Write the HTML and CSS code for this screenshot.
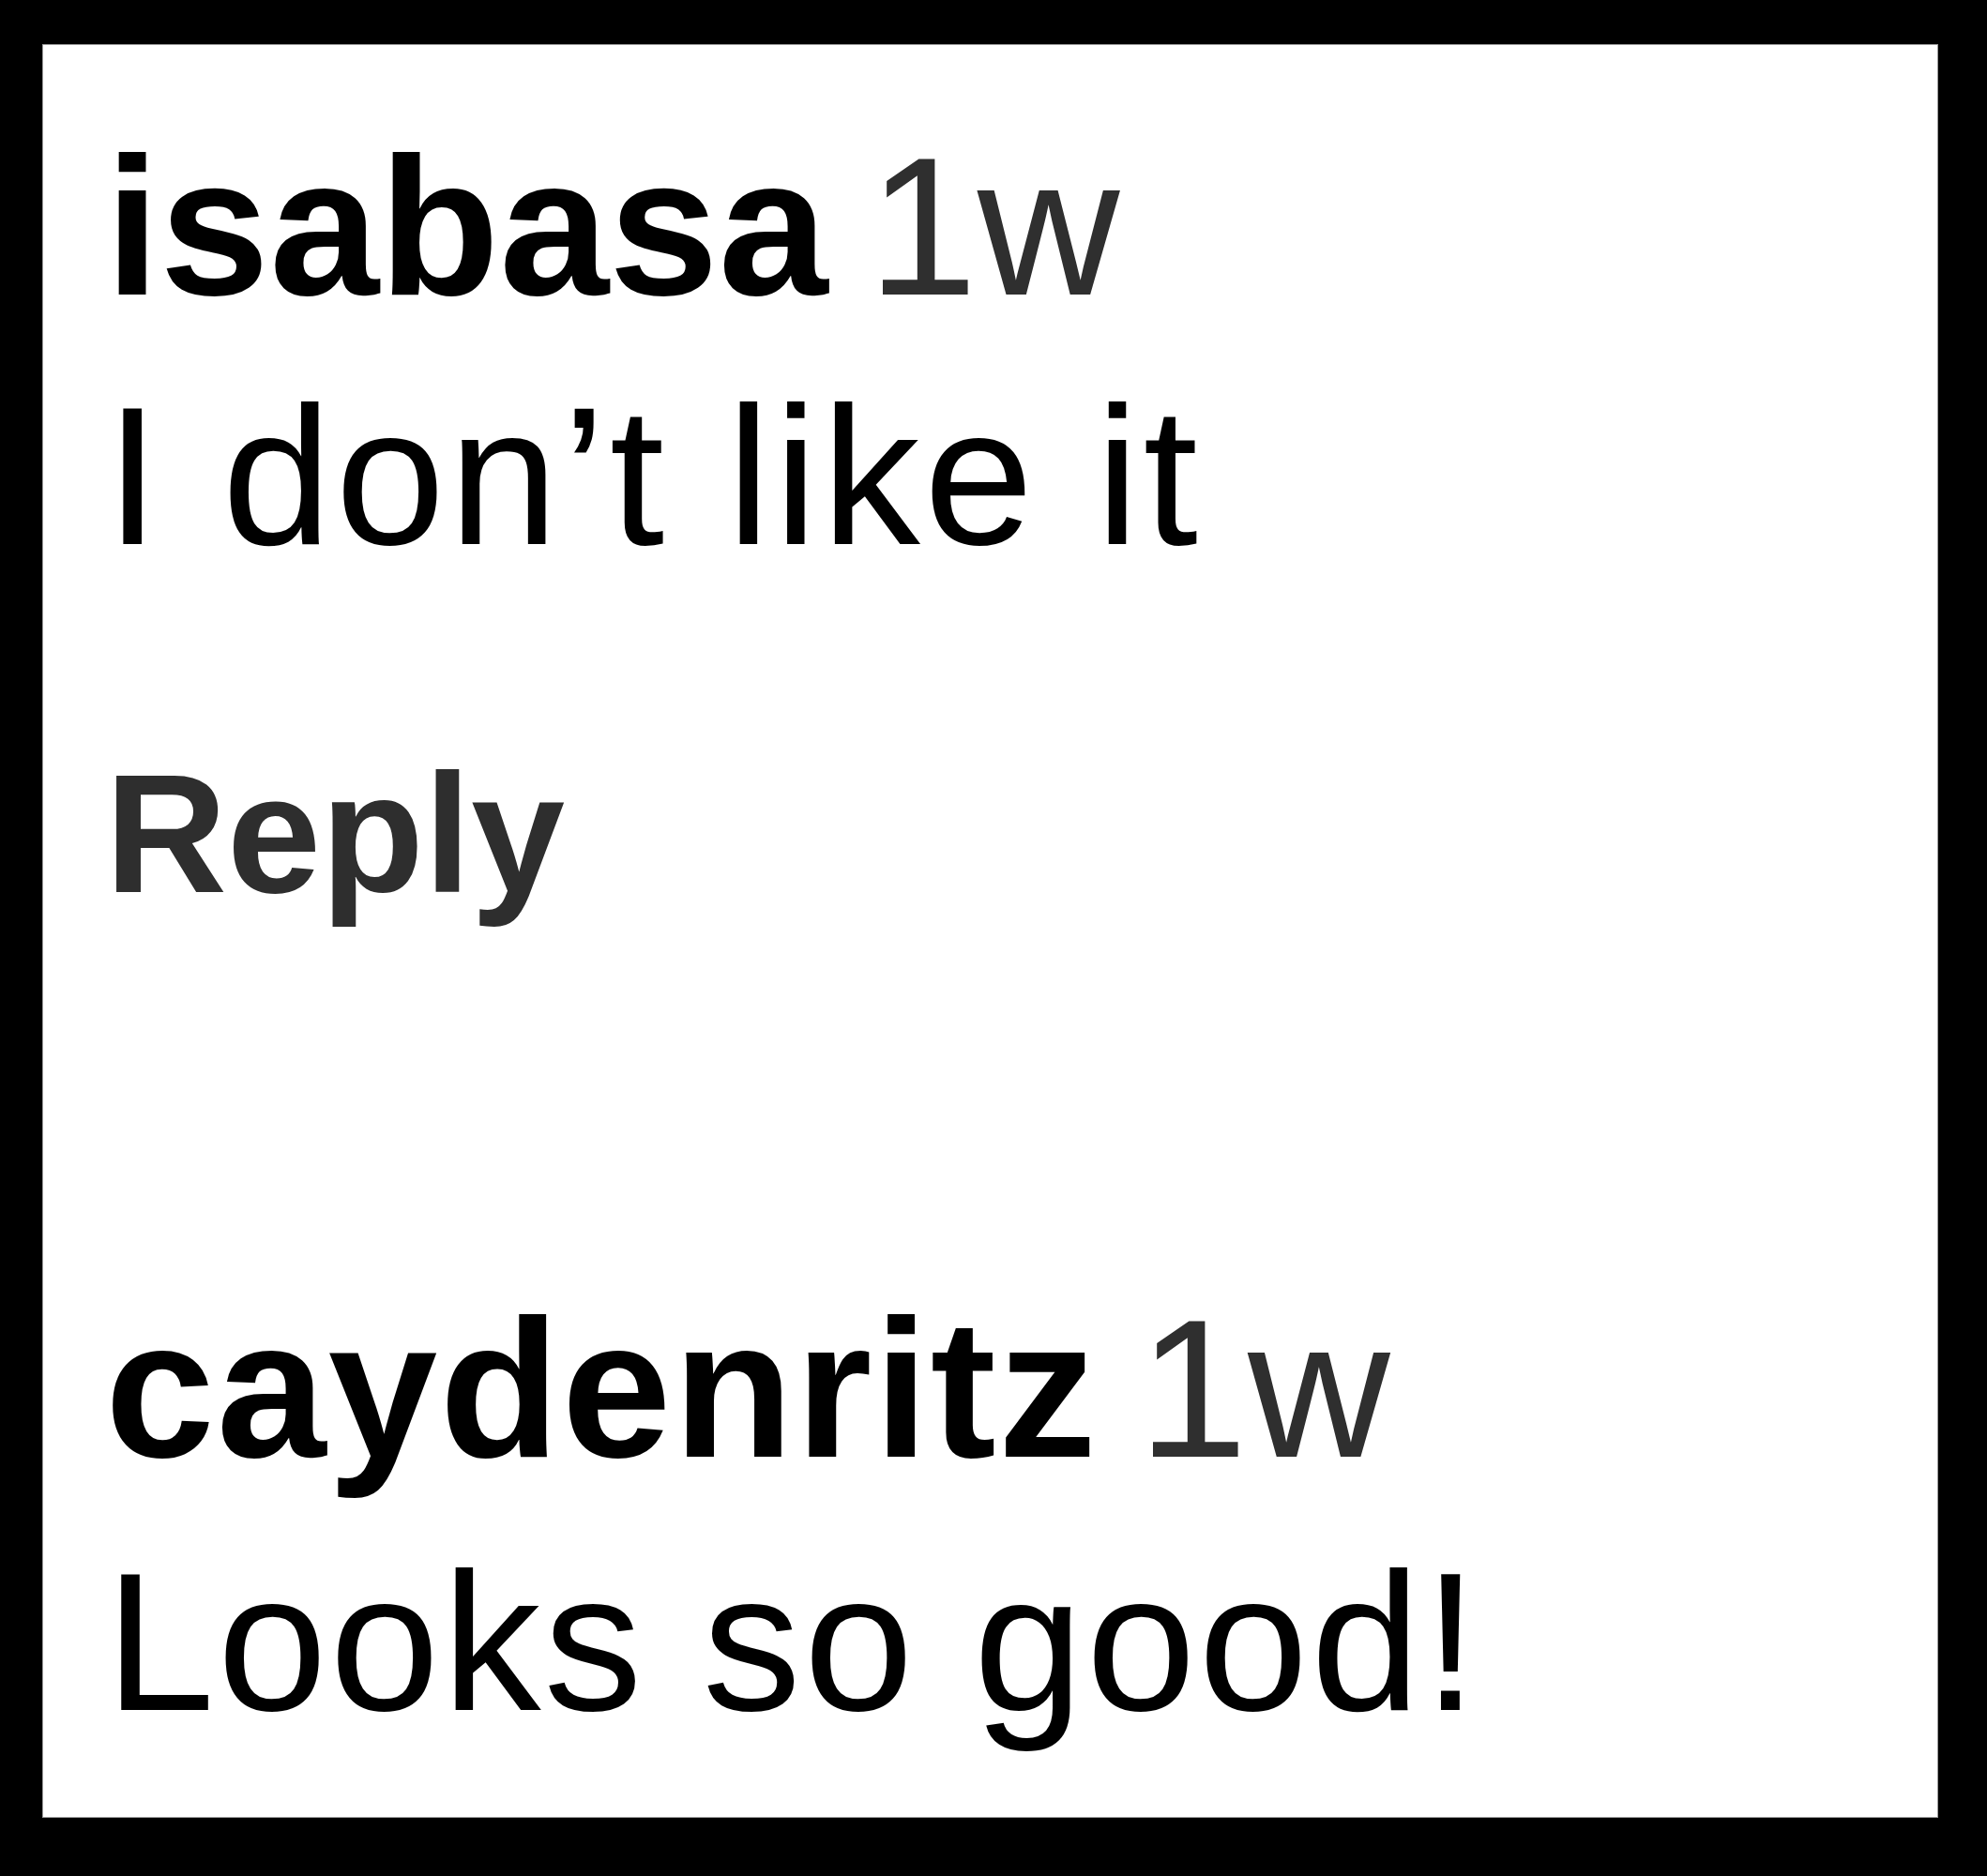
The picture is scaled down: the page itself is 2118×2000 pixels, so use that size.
FILE: index.html
```html
<!DOCTYPE html>
<html lang="en">
<head>
<meta charset="utf-8">
<title>Comments</title>
<link rel="stylesheet" href="styles.css">
</head>
<body>
<div class="frame">
  <div class="comment">
    <div class="head"><span class="name">isabasa</span> <span class="time">1w</span></div>
    <div class="text">I don’t like it</div>
    <div class="reply">Reply</div>
  </div>
  <div class="comment second">
    <div class="head"><span class="name name-wide">caydenritz</span> <span class="time">1w</span></div>
    <div class="text text-tight">Looks so good!</div>
  </div>
</div>
</body>
</html>
```
FILE: styles.css
```css
html, body {
  margin: 0;
  padding: 0;
  background: #000;
}
body {
  width: 2118px;
  height: 2000px;
  padding: 47px 0 0 45px;
  box-sizing: border-box;
  font-family: "Liberation Sans", Arial, sans-serif;
}
.frame {
  width: 2021px;
  height: 1891px;
  box-sizing: border-box;
  background: #fff;
  border: 1px solid #9a9a9a;
  padding: 61px 0 0 66px;
  display: flex;
  flex-direction: column;
}
.comment {
  display: flex;
  flex-direction: column;
}
.head, .text {
  font-size: 210px;
  line-height: 266px;
  color: #000;
  white-space: nowrap;
}
.text {
  letter-spacing: 4px;
}
.text-tight {
  letter-spacing: 3px;
}
.name {
  font-weight: 700;
}
.name-wide {
  letter-spacing: 2px;
}
.time {
  margin-left: -16px;
  color: #2f2f2f;
  font-weight: 400;
}
.reply {
  margin-top: 140px;
  font-size: 180px;
  line-height: 216px;
  font-weight: 700;
  color: #2e2e2e;
}
.second {
  margin-top: 349px;
}
.second .head, .second .text {
  line-height: 270px;
}
```
